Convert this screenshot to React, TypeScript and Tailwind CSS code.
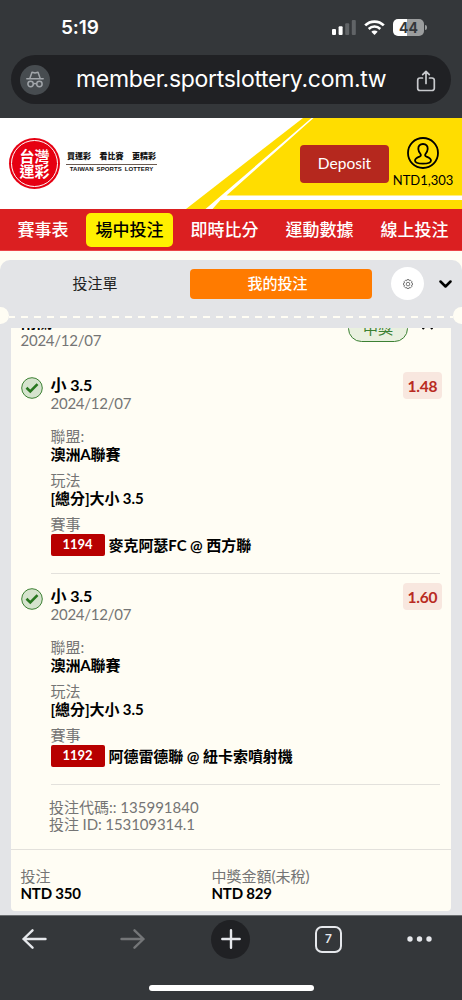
import type { ReactNode } from "react";

interface Leg {
	id: string;
	pick: string;
	date: string;
	odds: string;
	league: string;
	market: string;
	match: string;
}

const legs: Leg[] = [
	{
		id: "1194",
		pick: "小 3.5",
		date: "2024/12/07",
		odds: "1.48",
		league: "澳洲A聯賽",
		market: "[總分]大小 3.5",
		match: "麥克阿瑟FC @ 西方聯",
	},
	{
		id: "1192",
		pick: "小 3.5",
		date: "2024/12/07",
		odds: "1.60",
		league: "澳洲A聯賽",
		market: "[總分]大小 3.5",
		match: "阿德雷德聯 @ 紐卡索噴射機",
	},
];

const navItems = ["賽事表", "場中投注", "即時比分", "運動數據", "線上投注"];

const BrowserTop = () => (
	<div className="h-[118px] shrink-0 bg-[#34373a] font-['Inter',sans-serif] text-white">
		<div className="flex h-[55px] items-center pl-[61px] pr-[35px]">
			<span className="text-[19px] font-semibold leading-none tracking-[-0.1px]">5:19</span>
			<svg className="ml-auto" width="24" height="15" viewBox="0 0 24 15">
				<rect x="0" y="9" width="4" height="6" rx="1" fill="#fff" />
				<rect x="6.6" y="6.3" width="4" height="8.7" rx="1" fill="#fff" />
				<rect x="13.2" y="3.3" width="4" height="11.7" rx="1" fill="#616467" />
				<rect x="19.8" y="0" width="4" height="15" rx="1" fill="#616467" />
			</svg>
			<svg className="ml-2" width="21" height="15" viewBox="0 0 21 15">
				<path d="M1.2 5.4a13.2 13.2 0 0 1 18.6 0" fill="none" stroke="#fff" strokeWidth="2.7" />
				<path d="M4.7 9a8.2 8.2 0 0 1 11.6 0" fill="none" stroke="#fff" strokeWidth="2.5" />
				<path d="M10.5 15 7.3 11.8a4.6 4.6 0 0 1 6.4 0z" fill="#fff" />
			</svg>
			<div className="ml-2 flex h-[17px] w-[31px] items-center justify-center rounded-[5px] bg-[linear-gradient(to_right,#fff_44%,#9b9d9e_44%)] text-[14px] font-bold leading-none text-[#34373a]">
				44
			</div>
			<span className="ml-px h-[5px] w-[2px] rounded-r-full bg-[#9b9d9e]" />
		</div>
		<div className="mx-[11px] flex h-[49px] items-center rounded-full bg-[#202124] pl-[9px] pr-[15px]">
			<span className="flex size-[30px] items-center justify-center rounded-full bg-[#474c50]">
				<svg width="18" height="17" viewBox="0 0 18 17" fill="none" stroke="#a2a6ab" strokeWidth="1.5" strokeLinecap="round" strokeLinejoin="round">
					<path d="M.8 7.7h16.4M3.8 7.5 6 1.3 9 2l3-.7 2.2 6.2" />
					<circle cx="4.6" cy="13" r="2.7" />
					<circle cx="13.4" cy="13" r="2.7" />
					<path d="M7.5 13q1.5-1 3 0" />
				</svg>
			</span>
			<span className="ml-[26px] whitespace-nowrap text-[23px] leading-none tracking-[-0.3px]">
				member.sportslottery.com.tw
			</span>
			<svg className="ml-auto mt-[2px]" width="20" height="22" viewBox="0 0 20 22" fill="none" stroke="#c8cacd" strokeWidth="1.7" strokeLinecap="round" strokeLinejoin="round">
				<path d="M6.5 8H4a2.3 2.3 0 0 0-2.3 2.3v7.9A2.3 2.3 0 0 0 4 20.500h12a2.3 2.3 0 0 0 2.3-2.300v-7.900A2.300 2.300 0 0 0 16 8h-2.500M10 13.500V1.500M6.700 4.700 10 1.400l3.300 3.300" />
			</svg>
		</div>
	</div>
);

const SiteHeader = () => (
	<div className="relative flex h-[91px] shrink-0 items-start bg-white">
		<svg className="absolute inset-0" width="462" height="91" viewBox="0 0 462 91">
			<path d="M303 0H462V91H186z" fill="#ffdd00" />
			<path d="M311.500 0 205.500 91h7L220.500 82H462V77.500H226.500L313.500 0z" fill="#fff" />
		</svg>
		<div className="relative ml-[9px] mt-[20px] flex size-[51px] items-center justify-center rounded-full bg-[#e60012] p-[2px]">
			<div className="flex size-full flex-col items-center justify-center rounded-full border border-white text-[15px] font-bold leading-[15px] text-white">
				<span className="h-[15px]">台灣</span>
				<span className="h-[15px]">運彩</span>
			</div>
		</div>
		<div className="relative ml-[6px] mt-[32px] w-[91px] whitespace-nowrap text-center font-['Liberation_Sans','Noto_Sans_CJK_TC',sans-serif] text-[#111]">
			<div className="flex h-[15px] justify-between border-b border-[#6b5a50] px-[1px] pt-px text-[8px] font-black leading-[12px]">
				<span>買運彩</span>
				<span>看比賽</span>
				<span>更精彩</span>
			</div>
			<div className="text-[6px] font-bold leading-[9px] tracking-[0.1px] [word-spacing:1.2px]">
				TAIWAN SPORTS LOTTERY
			</div>
		</div>
		<div className="relative ml-auto mt-[27px] flex h-[38px] w-[89px] items-center justify-center rounded-[4px] bg-[#b5281e] text-[15.5px] text-white">
			Deposit
		</div>
		<div className="relative ml-[4px] mr-[9px] mt-[19px] flex w-[60px] flex-col items-center whitespace-nowrap text-[13px] leading-[18px] text-black">
			<svg width="32" height="32" viewBox="0 0 32 32" fill="none" stroke="#000" strokeWidth="1.8">
				<circle cx="16" cy="16" r="15" />
				<path d="M16 7c-3.200 0-4.800 2.200-4.700 5 .1 2.300 1 3.500 2.200 5 .8 1.200.3 2-1 2.600-2.700 1.100-4.500 2-4.500 3.800 0 2.200 4 3.200 8 3.200s8-1 8-3.200c0-1.800-1.800-2.700-4.500-3.800-1.300-.6-1.800-1.400-1-2.600 1.200-1.500 2.100-2.700 2.200-5 .1-2.800-1.500-5-4.700-5z" />
			</svg>
			<span className="mt-[2px]">NTD1,303</span>
		</div>
	</div>
);

const Nav = () => (
	<div className="flex h-[42px] shrink-0 items-center border-b border-[#ea4448] bg-[#db1f21] pl-[9px] text-[17px] font-medium text-white">
		{navItems.map((item, i) => (
			<span
				key={item}
				className={
					i === 1
						? "ml-[9px] mr-[4px] flex h-[34px] w-[87px] items-center justify-center rounded-[5px] bg-[#fff000] text-black"
						: i === 0
							? "flex w-[68px] justify-center"
							: "flex w-[95px] justify-center"
				}
			>
				{item}
			</span>
		))}
	</div>
);

const SlipHeader = () => (
	<div className="h-[68px]">
		<div className="flex h-[47px] items-center">
			<span className="w-[190px] text-center text-[15px] text-[#222]">投注單</span>
			<span className="flex h-[30px] w-[182px] items-center justify-center rounded-[4px] bg-[#ff7b00] pr-[7px] text-[15px] font-medium text-white">
				我的投注
			</span>
			<span className="ml-[19px] flex size-[33px] items-center justify-center rounded-full bg-white">
				<svg width="10" height="10" viewBox="0 0 24 24" fill="none" stroke="#555" strokeWidth="1.9" strokeLinejoin="round">
					<path d="M9.500 1.500h5l.8 2.700 2.700-1.200 3.300 3.400-1.300 2.600 3 .9v4.500l-3 .9 1.300 2.500-3.300 3.500-2.700-1.300-.8 3h-5l-.8-3L6 21.300l-3.300-3.500L4 15.300l-3-.9V9.900L4 9 2.700 6.400 6 3l2.700 1.200z" />
					<circle cx="12" cy="12.200" r="4.300" />
				</svg>
			</span>
			<svg className="ml-[15px]" width="13" height="8" viewBox="0 0 13 8" fill="none" stroke="#000" strokeWidth="2.500" strokeLinecap="round" strokeLinejoin="round">
				<path d="M1.500 1.500l5 5 5-5" />
			</svg>
		</div>
		{/* perforated edge of the slip */}
		<div className="flex h-[17px] items-center overflow-hidden">
			<span className="-ml-[8px] size-[17px] shrink-0 rounded-full bg-[#fffdf4]" />
			<span className="mt-[3px] h-[2px] flex-1 bg-[repeating-linear-gradient(to_right,#fffdf4_0,#fffdf4_7px,transparent_7px,transparent_13px)] bg-[position:-1px_0]" />
			<span className="-mr-[8px] size-[17px] shrink-0 rounded-full bg-[#fffdf4]" />
		</div>
	</div>
);

const Field = ({ label, children }: { label: string; children: ReactNode }) => (
	<div className="mb-2 leading-[18px]">
		<div className="h-[18px] text-[#757575]">{label}</div>
		<div className="h-[18px] font-bold tracking-[-0.1px]">{children}</div>
	</div>
);

const BetLeg = ({ leg }: { leg: Leg }) => (
	<div className="flex h-[211px] pl-[9.5px] pr-[11px]">
		<svg className="mt-[14px] shrink-0" width="22" height="22" viewBox="0 0 22 22">
			<circle cx="11" cy="11" r="10.300" fill="#d5e3cd" stroke="#3c8033" strokeWidth="1" />
			<path d="m5.500 10.800 3.800 3.700 7.200-7.300" fill="none" stroke="#28771f" strokeWidth="2.600" />
		</svg>
		<div className="ml-[8px] flex-1 border-b border-[#e3e1dc] pt-[13px]">
			<div className="flex h-[36px] justify-between leading-[18px]">
				<div>
					<div className="h-[18px] text-[16px] font-bold tracking-[-0.1px]">{leg.pick}</div>
					<div className="h-[18px] tracking-[-0.25px] text-[#757575]">{leg.date}</div>
				</div>
				<span className="-mr-[2px] -mt-[4px] flex h-[27px] w-[39px] items-center justify-center rounded-[4px] bg-[#f8e7df] text-[15.5px] font-bold tracking-[-0.2px] text-[#b92b22]">
					{leg.odds}
				</span>
			</div>
			<div className="mt-[15px]">
				<Field label="聯盟:">{leg.league}</Field>
				<Field label="玩法">{leg.market}</Field>
				<div className="h-[18px] leading-[18px] text-[#757575]">賽事</div>
				<div className="mt-px flex h-[22px] items-center whitespace-nowrap font-bold tracking-[-0.05px]">
					<span className="mr-[4px] flex h-[22px] w-[54px] items-center justify-center rounded-[2px] bg-[#b80000] text-[13px] text-white">
						{leg.id}
					</span>
					{leg.match}
				</div>
			</div>
		</div>
	</div>
);

const BetCard = () => (
	<div className="mx-[11px] h-[583px] overflow-hidden rounded-b-[4px] bg-[#fffdf4] text-[15px] text-black">
		{/* summary row scrolled partly out of view */}
		<div className="flex h-[35px] justify-between pl-[9.5px] pr-[17px]">
			<div className="-mt-[15px] leading-[18px]">
				<div className="h-[18px] text-[16px] font-bold">兩關</div>
				<div className="tracking-[-0.25px] text-[#757575]">2024/12/07</div>
			</div>
			<div className="flex">
				<span className="-mt-[13px] flex h-[27px] w-[60px] items-center justify-center rounded-full border border-[#3c8033] bg-[#e9f0df] text-[#3c8033]">
					中獎
				</span>
				<svg className="-mt-[6px] ml-[13px]" width="13" height="8" viewBox="0 0 13 8" fill="none" stroke="#000" strokeWidth="2">
					<path d="m1.500 7 5-5 5 5" />
				</svg>
			</div>
		</div>
		{legs.map((leg) => (
			<BetLeg key={leg.id} leg={leg} />
		))}
		<div className="h-[65px] border-b border-[#e3e1dc] pl-[38px] pt-[14px] leading-[17px] text-[#757575]">
			<div className="h-[17px]">投注代碼:: 135991840</div>
			<div className="h-[17px] tracking-[-0.1px]">投注 ID: 153109314.1</div>
		</div>
		<div className="flex pl-[9.5px] pt-[18px] leading-[17px]">
			<div className="w-[191px]">
				<div className="h-[17px] text-[#757575]">投注</div>
				<div className="h-[17px] font-bold tracking-[-0.2px]">NTD 350</div>
			</div>
			<div>
				<div className="h-[17px] text-[#757575]">中獎金額(未稅)</div>
				<div className="h-[17px] font-bold tracking-[-0.2px]">NTD 829</div>
			</div>
		</div>
	</div>
);

const BrowserBottom = () => (
	<div className="flex h-[85px] shrink-0 flex-col items-center border-t border-[#6b6e70] bg-[#34373a]">
		<div className="flex h-[46px] w-full items-center pl-[22px] pr-[30px]">
			<svg width="25" height="20" viewBox="0 0 25 20" fill="none" stroke="#e6e8ec" strokeWidth="2.400" strokeLinecap="round" strokeLinejoin="round">
				<path d="M23.500 10H1.500M10.500 1.300 1.500 10l9 8.700" />
			</svg>
			<svg className="ml-[73px]" width="25" height="20" viewBox="0 0 25 20" fill="none" stroke="#747678" strokeWidth="2.400" strokeLinecap="round" strokeLinejoin="round">
				<path d="M1.500 10h22M14.500 1.300l9 8.700-9 8.700" />
			</svg>
			<span className="ml-[66px] flex size-[39px] items-center justify-center rounded-full bg-[#202124]">
				<svg width="20" height="20" viewBox="0 0 20 20" stroke="#e6e8ec" strokeWidth="2.400" strokeLinecap="round">
					<path d="M10 1.300v17.400M1.300 10h17.400" />
				</svg>
			</span>
			<span className="ml-[65px] flex size-[27px] items-center justify-center rounded-[7px] border-2 border-[#e6e8ec] font-['Inter',sans-serif] text-[12px] font-semibold text-[#e6e8ec]">
				7
			</span>
			<svg className="ml-auto" width="25" height="6" viewBox="0 0 25 6" fill="#e6e8ec">
				<circle cx="3" cy="3" r="2.700" />
				<circle cx="12.500" cy="3" r="2.700" />
				<circle cx="22" cy="3" r="2.700" />
			</svg>
		</div>
		<span className="mt-[23px] h-[6px] w-[165px] rounded-full bg-white" />
	</div>
);

const App = () => {
	return (
		<div className="flex h-[1000px] w-[462px] flex-col overflow-hidden bg-[#fffdf4] font-['Lato','Noto_Sans_CJK_TC',sans-serif]">
			<BrowserTop />
			<SiteHeader />
			<Nav />
			<div className="mt-[9px] h-[655px] shrink-0 overflow-hidden rounded-t-[10px] bg-[#e3e4e7]">
				<SlipHeader />
				<BetCard />
			</div>
			<BrowserBottom />
		</div>
	);
};

export default App;
